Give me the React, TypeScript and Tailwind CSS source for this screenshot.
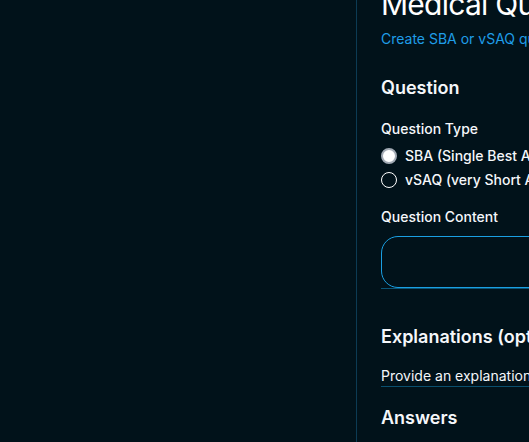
const QUESTION_TYPES = [
  { id: "sba", label: "SBA (Single Best Answer)", checked: true },
  { id: "vsaq", label: "vSAQ (very Short Answer Question)", checked: false },
];

function Radio({ checked }: { checked: boolean }) {
  return checked ? (
    <span className="h-4 w-4 shrink-0 rounded-full border-2 border-[#a3abb5] bg-white" />
  ) : (
    <span className="h-4 w-4 shrink-0 rounded-full border-[1.5px] border-white" />
  );
}

export default function App() {
  return (
    <div className="flex h-[442px] w-[529px] overflow-hidden bg-[#01121a] font-['Inter','Noto_Sans',sans-serif] text-[#f5f7fa]">
      <aside className="w-[357px] shrink-0 border-r border-[#0c3b54]" />
      <main className="min-w-0 flex-1 overflow-hidden pl-6">
        <div className="-mt-[14px] w-[640px]">
          <h1 className="text-3xl tracking-tight text-white">Medical Question Builder</h1>
          <p className="mt-[7px] text-sm text-[#1f9de8]">
            Create SBA or vSAQ questions for medical exams
          </p>

          <section className="mt-[25px]">
            <h2 className="text-lg font-semibold">Question</h2>

            <label className="mt-[17px] block text-sm font-medium">Question Type</label>
            <div className="mt-[5px]">
              {QUESTION_TYPES.map((type) => (
                <div key={type.id} className="flex h-6 items-center gap-2">
                  <Radio checked={type.checked} />
                  <span className="text-sm font-medium">{type.label}</span>
                </div>
              ))}
            </div>

            <label className="mt-[15px] block text-sm font-medium">Question Content</label>
            <div className="mt-[9px] border-b border-[#0a5577]">
              <div className="h-[52px] rounded-[17px] border border-[#1a9fe2]" />
            </div>
          </section>

          <section className="mt-[34px]">
            <h2 className="text-lg font-semibold">Explanations (optional)</h2>
            <p className="mt-[15px] border-b border-[#0a4f6e] text-sm">
              Provide an explanation for the correct answer
            </p>
          </section>

          <section className="mt-[17px]">
            <h2 className="text-lg font-semibold">Answers</h2>
          </section>
        </div>
      </main>
    </div>
  );
}
